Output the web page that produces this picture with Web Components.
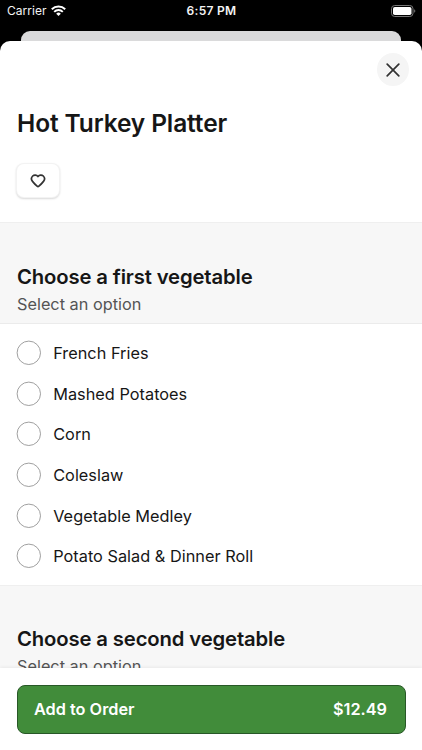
<!DOCTYPE html>
<html lang="en">
  <head>
    <meta charset="utf-8" />
    <title>Hot Turkey Platter</title>
    <style>
      html,
      body {
        margin: 0;
        height: 100%;
        background: #000;
        overflow: hidden;
      }
      body {
        display: flex;
        flex-direction: column;
        font-family: Inter, "Liberation Sans", sans-serif;
        font-variant-ligatures: none;
        color: #161616;
      }
    </style>
  </head>
  <body>
    <status-bar carrier="Carrier" time="6:57 PM"></status-bar>
    <item-sheet heading="Hot Turkey Platter">
      <option-group heading="Choose a first vegetable" hint="Select an option">
        <option-row>French Fries</option-row>
        <option-row>Mashed Potatoes</option-row>
        <option-row>Corn</option-row>
        <option-row>Coleslaw</option-row>
        <option-row>Vegetable Medley</option-row>
        <option-row>Potato Salad &amp; Dinner Roll</option-row>
      </option-group>
      <option-group heading="Choose a second vegetable" hint="Select an option"></option-group>
      <order-button slot="footer" price="$12.49">Add to Order</order-button>
    </item-sheet>

    <script>
      class StatusBar extends HTMLElement {
        constructor() {
          super();
          this.attachShadow({ mode: "open" });
        }

        connectedCallback() {
          this.shadowRoot.innerHTML = /* HTML */ `
            <style>
              :host {
                display: grid;
                grid-template-columns: 1fr auto 1fr;
                align-items: center;
                flex: none;
                box-sizing: border-box;
                height: 31px;
                padding: 0 6px 9px 7px;
                color: #f4f4f4;
                font-size: 12px;
                line-height: 16px;
              }
              .left {
                display: flex;
                align-items: center;
                gap: 4px;
                letter-spacing: 0.05px;
              }
              .time {
                font-weight: 600;
                letter-spacing: 0.3px;
              }
              svg {
                display: block;
              }
              .wifi {
                margin-top: -2px;
              }
              .battery {
                justify-self: end;
                margin-top: -1px;
              }
            </style>
            <div class="left">
              <span>${this.getAttribute("carrier")}</span>
              <svg class="wifi" width="15" height="11" viewBox="0 0 15 11" fill="none" stroke="#fff">
                <path d="M0.8 4.2a9.5 9.5 0 0 1 13.4 0" stroke-width="2" />
                <path d="M3.2 6.8a6 6 0 0 1 8.6 0" stroke-width="1.9" />
                <path d="M7.5 11L5.2 8.7a3.3 3.3 0 0 1 4.6 0z" fill="#fff" stroke="none" />
              </svg>
            </div>
            <span class="time">${this.getAttribute("time")}</span>
            <svg class="battery" width="25" height="12" viewBox="0 0 25 12">
              <rect x="0.5" y="0.5" width="21.5" height="11" rx="3.2" fill="none" stroke="#777" />
              <rect x="2" y="2" width="18.5" height="8" rx="1.8" fill="#fff" />
              <path d="M23.2 4.2a2 2 0 0 1 0 3.6z" fill="#777" />
            </svg>
          `;
        }
      }

      class ItemSheet extends HTMLElement {
        constructor() {
          super();
          this.attachShadow({ mode: "open" });
        }

        connectedCallback() {
          this.shadowRoot.innerHTML = /* HTML */ `
            <style>
              :host {
                display: flex;
                flex-direction: column;
                flex: 1;
                min-height: 0;
              }
              /* edge of the page stacked behind the sheet */
              .behind {
                flex: none;
                height: 10px;
                margin: 0 21px;
                border-radius: 9px 9px 0 0;
                background: #dadadb;
              }
              .sheet {
                display: flex;
                flex-direction: column;
                flex: 1;
                min-height: 0;
                border-radius: 10px 10px 0 0;
                background: #fff;
                overflow: hidden;
              }
              .content {
                flex: 1;
                min-height: 0;
                overflow: hidden;
              }
              header {
                display: flex;
                flex-direction: column;
                box-sizing: border-box;
                height: 181px;
                padding: 12px 13px 0 17px;
              }
              button {
                display: flex;
                align-items: center;
                justify-content: center;
                padding: 0;
                border: 0;
                color: #333;
              }
              .close {
                align-self: flex-end;
                width: 32px;
                height: 33px;
                border-radius: 50%;
                background: #f5f5f5;
              }
              h1 {
                margin: 21px 0 25px;
                font-size: 24.5px;
                font-weight: 600;
                line-height: 32px;
                letter-spacing: -0.12px;
                white-space: nowrap;
              }
              .save {
                width: 42px;
                height: 33px;
                border-radius: 7px;
                background: #fff;
                box-shadow: 0 0 0 1px #f3f3f3, 0 1px 2px 0.5px rgba(0, 0, 0, 0.15);
              }
              footer {
                position: relative;
                flex: none;
                box-sizing: border-box;
                height: 82px;
                padding: 17px 16px 0 17px;
                background: #fff;
                box-shadow: 0 -1px 3px rgba(0, 0, 0, 0.06);
              }
            </style>
            <div class="behind"></div>
            <div class="sheet">
              <div class="content">
                <header>
                  <button class="close" aria-label="Close">
                    <svg width="14" height="14" viewBox="0 0 14 14" stroke="currentColor" stroke-width="1.7" stroke-linecap="round">
                      <path d="M1.2 1.2L12.8 12.8M12.8 1.2L1.2 12.8" />
                    </svg>
                  </button>
                  <h1>${this.getAttribute("heading")}</h1>
                  <button class="save" aria-label="Save">
                    <svg width="16" height="14" viewBox="0 0 16 14" fill="none" stroke="currentColor" stroke-width="1.7" stroke-linejoin="round">
                      <path d="M8 2.5C6.6 0.8 4.2 0.6 2.7 2C1.2 3.5 1.2 5.8 2.5 7.4C4 9.3 5.7 11 7.1 12.2C7.7 12.7 8.3 12.7 8.9 12.2C10.3 11 12 9.3 13.5 7.4C14.8 5.8 14.8 3.5 13.3 2C11.8 0.6 9.4 0.8 8 2.5z" />
                    </svg>
                  </button>
                </header>
                <slot></slot>
              </div>
              <footer><slot name="footer"></slot></footer>
            </div>
          `;
        }
      }

      class OptionGroup extends HTMLElement {
        constructor() {
          super();
          this.attachShadow({ mode: "open" });
        }

        connectedCallback() {
          this.shadowRoot.innerHTML = /* HTML */ `
            <style>
              :host {
                display: block;
              }
              .head {
                box-sizing: border-box;
                height: 102px;
                padding: 39.5px 17px 0;
                border-top: 1px solid #efefef;
                border-bottom: 1px solid #ebebeb;
                background: #f7f7f7;
              }
              h2 {
                margin: 0;
                font-size: 20.3px;
                font-weight: 600;
                line-height: 28px;
                letter-spacing: -0.14px;
                white-space: nowrap;
              }
              p {
                margin: 0;
                color: #545454;
                font-size: 16.3px;
                line-height: 26px;
              }
              .options {
                padding: 8.5px 17px 8px;
              }
            </style>
            <div class="head">
              <h2>${this.getAttribute("heading")}</h2>
              <p>${this.getAttribute("hint")}</p>
            </div>
            <div class="options"><slot></slot></div>
          `;
        }
      }

      class OptionRow extends HTMLElement {
        constructor() {
          super();
          this.attachShadow({ mode: "open" });
          this.shadowRoot.innerHTML = /* HTML */ `
            <style>
              :host {
                display: flex;
                align-items: center;
                gap: 11.2px;
                height: 40.7px;
                font-size: 16.3px;
                line-height: 24px;
                letter-spacing: 0.02px;
                white-space: nowrap;
              }
              svg {
                display: block;
                flex: none;
                margin-left: -1px;
              }
            </style>
            <svg width="26" height="26" viewBox="0 0 26 26">
              <circle cx="12.8" cy="12.8" r="11.7" fill="none" stroke="#a0a0a0" />
            </svg>
            <span><slot></slot></span>
          `;
        }
      }

      class OrderButton extends HTMLElement {
        constructor() {
          super();
          this.attachShadow({ mode: "open" });
        }

        connectedCallback() {
          this.shadowRoot.innerHTML = /* HTML */ `
            <style>
              :host {
                display: flex;
                align-items: center;
                justify-content: space-between;
                box-sizing: border-box;
                height: 49px;
                padding: 0 18px 1px 16px;
                border: 1px solid #285827;
                border-radius: 8px;
                background: #418c3a;
                color: #fff;
                font-size: 16.3px;
                font-weight: 600;
                line-height: 24px;
                white-space: nowrap;
              }
            </style>
            <span><slot></slot></span>
            <span>${this.getAttribute("price")}</span>
          `;
        }
      }

      customElements.define("status-bar", StatusBar);
      customElements.define("item-sheet", ItemSheet);
      customElements.define("option-group", OptionGroup);
      customElements.define("option-row", OptionRow);
      customElements.define("order-button", OrderButton);
    </script>
  </body>
</html>
